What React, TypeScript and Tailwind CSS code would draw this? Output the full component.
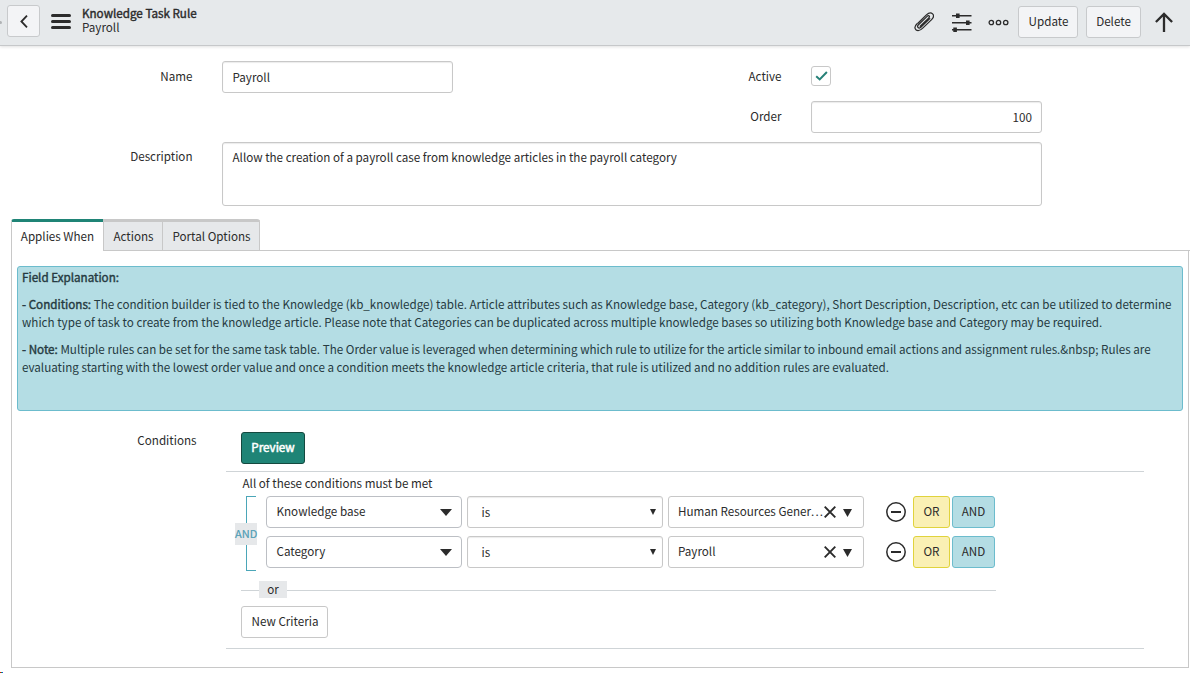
import React from "react";

const Caret: React.FC<{ className: string }> = ({ className }) => (
  <svg className={className} viewBox="0 0 10 10" preserveAspectRatio="none" fill="#2b2b2b">
    <path d="M0 0h10L5 10z" />
  </svg>
);

const ConditionRow: React.FC<{ field: string; value: string; clipped?: boolean }> = ({ field, value, clipped }) => (
  <div className="flex h-8 items-center">
    <div className="flex h-8 w-[196px] items-center justify-between rounded border border-[#bcbfc4] pr-[9px] pl-[9.5px]">
      <span className="pb-[2px] leading-4">{field}</span>
      <Caret className="h-[7px] w-3" />
    </div>
    <div className="ml-[5px] flex h-8 w-[196px] items-center justify-between rounded-[3px] border border-[#c8c8c8] pr-[6px] pl-[13.5px] shadow-[inset_0_1px_1px_rgba(0,0,0,0.08)]">
      <span className="leading-4">is</span>
      <Caret className="h-[6px] w-[6px]" />
    </div>
    <div className="ml-[5px] flex h-8 w-[196px] items-center rounded-[3px] border border-[#c8c8c8] pr-[10px] pl-[9px]">
      <span className="w-[146px] pb-[2px] leading-4 whitespace-nowrap">
        {value}
        {clipped && <span className="tracking-[1.2px]">...</span>}
      </span>
      <svg className="h-3 w-3 shrink-0" viewBox="0 0 12 12" fill="none" stroke="#2b2b2b" strokeWidth="1.9">
        <path d="M0.7 0.7l10.6 10.6M11.3 0.7L0.7 11.3" />
      </svg>
      <Caret className="mt-[2px] ml-[7px] h-[8px] w-[9px]" />
    </div>
    <svg className="ml-[22px] h-5 w-5" viewBox="0 0 20 20" fill="none" stroke="#2b2b2b">
      <circle cx="10" cy="10" r="9.2" strokeWidth="1.5" />
      <path d="M5 10h10" strokeWidth="2" />
    </svg>
    <button className="ml-[7px] h-8 w-[37px] rounded-[3px] border border-[#e0d33c] bg-[#faf0b4] pb-[2px] leading-4">OR</button>
    <button className="ml-[2px] h-8 w-[43px] rounded-[3px] border border-[#6cbccd] bg-[#b4dde4] pb-[2px] leading-4">AND</button>
  </div>
);

const App: React.FC = () => {
  return (
    <div className="h-[673px] w-[1190px] overflow-hidden bg-white font-['Noto_Sans_CJK_SC','Open_Sans',sans-serif] text-[11.65px] leading-[18px] text-[#2b2b2b]">
      <header className="relative flex h-[46px] items-start border-b border-[#c6c8ca] bg-[#e6e9eb] shadow-[0_1px_3px_rgba(0,0,0,0.12)]">
        <span className="absolute top-[21px] left-0 h-[3px] w-[2px] rounded-r bg-[#b0b3b5]" />
        <button className="mt-[5px] ml-[7px] flex h-8 w-[33px] items-center justify-center rounded-[3px] border border-[#c8cacc] bg-[#f3f4f6]">
          <svg className="h-[13px] w-2" viewBox="0 0 8 13" fill="none" stroke="#2b2b2b" strokeWidth="1.8">
            <path d="M7 0.7L1.4 6.5L7 12.3" />
          </svg>
        </button>
        <div className="mt-[14px] ml-[11px] flex w-5 flex-col gap-[3px]">
          <span className="h-[3px] rounded-full bg-[#2b2b2b]" />
          <span className="h-[3px] rounded-full bg-[#2b2b2b]" />
          <span className="h-[3px] rounded-full bg-[#2b2b2b]" />
        </div>
        <div className="mt-[6px] ml-[11px] leading-[14px]">
          <h1 className="[-webkit-text-stroke:0.4px]">Knowledge Task Rule</h1>
          <p>Payroll</p>
        </div>
        <div className="ml-auto flex items-start pr-[17px]">
          <svg className="mt-3 h-5 w-5" viewBox="0 0 20 20" fill="none" stroke="#2b2b2b" strokeWidth="1.25" strokeLinecap="round" strokeLinejoin="round">
            <path d="M3.9 11.2L12.4 2.9C14.6.8 17.2.5 18.6 1.9C20 3.3 19.6 5.6 17.6 7.6L9 15.9C6.5 18.4 3.6 19.3 1.9 17.7C.2 16 .9 13.9 3 11.8M6.2 14.2L14.6 6.1M14.6 6.1C16.4 4.2 14.9 2.6 13.1 4.4L4.2 13C2.6 14.7 4.6 17.3 6.8 15.2L15.8 6.6" />
          </svg>
          <svg className="mt-3 ml-[18px] h-5 w-5" viewBox="0 0 20 20" fill="#2b2b2b">
            <path d="M0 3h19.5v1.5H0zM0 10h19.5v1.5H0zM0 17h19.5v1.5H0zM4 1.5h3.6v4.4H4zM14 8.5h3.6v4.4H14zM1.3 15.5h3.6v4.4H1.3z" />
          </svg>
          <svg className="mt-[19px] ml-[16px] h-[7px] w-[21px]" viewBox="0 0 21 7" fill="none" stroke="#2b2b2b" strokeWidth="1.3">
            <circle cx="3.3" cy="3.5" r="2.2" />
            <circle cx="10.5" cy="3.5" r="2.2" />
            <circle cx="17.7" cy="3.5" r="2.2" />
          </svg>
          <button className="mt-[6px] ml-[9px] h-8 w-[60px] rounded-[3px] border border-[#c8cacc] bg-[#f3f4f6] pb-[3px] pl-px leading-4">Update</button>
          <button className="mt-[6px] ml-2 h-8 w-[55px] rounded-[3px] border border-[#c8cacc] bg-[#f3f4f6] pb-[3px] leading-4">Delete</button>
          <svg className="mt-3 ml-[14px] h-5 w-[18px]" viewBox="0 0 18 20" fill="none" stroke="#2b2b2b" strokeWidth="2.3">
            <path d="M9 20V2M0.9 10L9 1.9L17.1 10" />
          </svg>
        </div>
      </header>

      <div className="flex h-[173px] flex-col pt-[15px]">
        <div className="flex h-[81px]">
          <div className="flex w-[589px]">
            <label className="mt-[6px] w-[193px] pr-[0.5px] text-right">Name</label>
            <div className="ml-[29px] h-8 w-[231px] rounded-[3px] border border-[#c8c8c8] px-[9.5px] pt-[6px] shadow-[inset_0_1px_1px_rgba(0,0,0,0.08)]">Payroll</div>
          </div>
          <div className="flex flex-col">
            <div className="flex h-10">
              <label className="mt-[6px] w-[193px] pr-[0.5px] text-right">Active</label>
              <div className="mt-[5px] ml-[29px] flex h-5 w-5 items-center justify-center rounded-[3px] border border-[#c8c8c8]">
                <svg className="h-[10px] w-[13px]" viewBox="0 0 12 10" fill="none" stroke="#278178" strokeWidth="2">
                  <path d="M0.7 5.2L4.2 8.4L11.4 1" />
                </svg>
              </div>
            </div>
            <div className="flex">
              <label className="mt-[6px] w-[193px] pr-[0.5px] text-right">Order</label>
              <div className="ml-[29px] h-8 w-[231px] rounded-[3px] border border-[#c8c8c8] px-[9px] pt-[6px] text-right shadow-[inset_0_1px_1px_rgba(0,0,0,0.08)]">100</div>
            </div>
          </div>
        </div>
        <div className="flex">
          <label className="mt-[5px] w-[193px] pr-[0.5px] text-right">Description</label>
          <div className="ml-[29px] h-16 w-[820px] rounded-[3px] border border-[#c8c8c8] px-[9.5px] pt-[5px] shadow-[inset_0_1px_1px_rgba(0,0,0,0.08)]">
            Allow the creation of a payroll case from knowledge articles in the payroll category
          </div>
        </div>
      </div>

      <div className="ml-[11px] flex h-8">
        <div className="w-[92px] rounded-tl-[3px] border-t-[3px] border-l border-t-[#1f8476] border-l-[#c8c8c8] pt-[5px] text-center">Applies When</div>
        <div className="w-[60px] border-t-[3px] border-r border-b border-l border-[#c8c8c8] bg-[#e6e8ea] pt-[5px] pl-px text-center">Actions</div>
        <div className="w-[97px] rounded-tr-[3px] border-t-[3px] border-r border-b border-[#c8c8c8] bg-[#e6e8ea] pt-[5px] pl-px text-center">Portal Options</div>
        <div className="flex-1 border-b border-[#c8c8c8]" />
      </div>

      <main className="ml-[11px] h-[417px] w-[1178px] border-x border-b border-[#c8c8c8] pt-[15px] pl-[5px]">
        <section className="h-[145px] w-[1166px] rounded-[3px] border border-[#6cbccd] bg-[#b4dde4] px-1 pt-px whitespace-nowrap text-[#253a41]">
          <p className="[-webkit-text-stroke:0.4px]">Field Explanation:</p>
          <p className="mt-[9px]">
            <b className="font-normal [-webkit-text-stroke:0.4px]">- Conditions:</b> The condition builder is tied to the Knowledge (kb_knowledge) table. Article attributes such as Knowledge base, Category (kb_category), Short Description, Description, etc can be utilized to determine
            <br />
            which type of task to create from the knowledge article. Please note that Categories can be duplicated across multiple knowledge bases so utilizing both Knowledge base and Category may be required.
          </p>
          <p className="mt-[9px]">
            <b className="font-normal [-webkit-text-stroke:0.4px]">- Note:</b> Multiple rules can be set for the same task table. The Order value is leveraged when determining which rule to utilize for the article similar to inbound email actions and assignment rules.&amp;nbsp; Rules are
            <br />
            evaluating starting with the lowest order value and once a condition meets the knowledge article criteria, that rule is utilized and no addition rules are evaluated.
          </p>
        </section>

        <div className="mt-[21px] flex">
          <label className="-mt-px w-[180px] pr-[0.5px] text-right">Conditions</label>
          <div className="ml-[29px] w-[918px]">
            <button className="ml-[15px] block h-8 w-16 rounded-[3px] border border-[#14493f] bg-[#1f8476] pb-[3px] leading-4 text-white [-webkit-text-stroke:0.5px]">Preview</button>
            <div className="mt-[7px] h-[178px] border-y border-[#cfd4d7] pl-[15px]">
              <p className="mt-[2px] ml-[1.5px]">All of these conditions must be met</p>
              <div className="mt-[4px] flex h-[76px]">
                <div className="relative ml-[5px] h-[75px] w-[10px] border-y border-l border-[#4ba6b8]">
                  <span className="absolute top-[26px] -left-3 h-[22px] w-[22px] bg-[#e6e8ea] text-center text-[11px] leading-[21px] text-[#4f9db5] [-webkit-text-stroke:0.2px]">AND</span>
                </div>
                <div className="ml-[10px] flex flex-col gap-2">
                  <ConditionRow field="Knowledge base" value="Human Resources Gener" clipped />
                  <ConditionRow field="Category" value="Payroll" />
                </div>
              </div>
              <div className="mt-[9px] flex h-[17px] w-[755px] items-center">
                <span className="mt-px h-px w-[18px] bg-[#cfd4d7]" />
                <span className="h-[17px] w-7 bg-[#e6e8ea] text-center leading-[16px]">or</span>
                <span className="mt-px h-px flex-1 bg-[#cfd4d7]" />
              </div>
              <button className="mt-2 block h-8 w-[87px] rounded-[3px] border border-[#c8c8c8] pb-[3px] pl-px leading-4">New Criteria</button>
            </div>
          </div>
        </div>
      </main>
      <div className="mt-1 flex h-px">
        <span className="w-px bg-red-600" />
        <span className="w-px bg-green-600" />
        <span className="w-px bg-blue-700" />
      </div>
    </div>
  );
};

export default App;
